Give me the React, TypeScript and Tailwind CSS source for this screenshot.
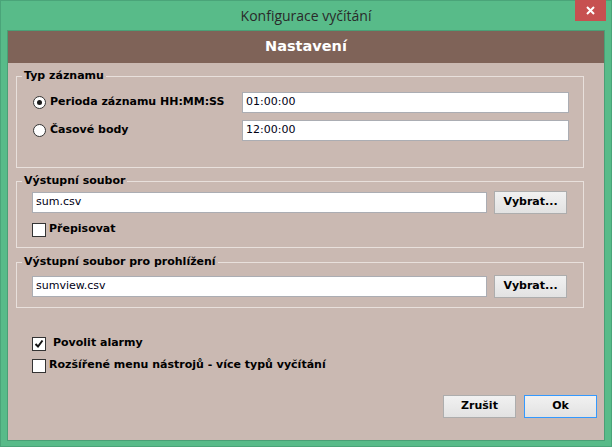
import React from "react";

const tah = { fontFamily: '"DejaVu Sans", Verdana, sans-serif' };

function Radio({ checked }: { checked?: boolean }) {
  return (
    <div className="w-[13px] h-[13px] rounded-full border border-[#333] bg-white flex items-center justify-center shrink-0">
      {checked && <div className="w-[5px] h-[5px] rounded-full bg-[#1a1a1a]" />}
    </div>
  );
}

function Check({ checked }: { checked?: boolean }) {
  return (
    <div className="w-[14px] h-[14px] border border-[#333] bg-white flex items-center justify-center shrink-0">
      {checked && (
        <svg width="10" height="10" viewBox="0 0 10 10">
          <polyline points="1.5,5 4,7.5 8.5,1.5" fill="none" stroke="#111" strokeWidth="2" />
        </svg>
      )}
    </div>
  );
}

function Input({ value }: { value: string }) {
  return (
    <div className="flex-1 h-[21px] border border-[#abadb3] bg-white flex items-center pl-[3px] text-[11px] text-[#000014]">
      {value}
    </div>
  );
}

function Btn({ label, focus }: { label: string; focus?: boolean }) {
  return (
    <div
      className={
        "w-[73px] h-[23px] flex items-center justify-center text-[11px] font-bold text-black bg-gradient-to-b from-[#f1f1f1] to-[#e2e2e2] border " +
        (focus ? "border-[#3399ff]" : "border-[#adadad]")
      }
    >
      {label}
    </div>
  );
}

function Group({ title, children, className }: { title: string; children: React.ReactNode; className?: string }) {
  return (
    <fieldset className={"border border-[#e8e0dc] m-0 p-0 " + (className ?? "")}>
      <legend className="ml-[5px] px-[2px] text-[11px] font-bold leading-[14px] text-black">{title}</legend>
      {children}
    </fieldset>
  );
}

export default function App() {
  return (
    <div
      className="w-[612px] h-[447px] bg-[#58bb89] border border-[#4aa479] relative flex flex-col"
      style={tah}
    >
      <div
        className="h-[29px] flex items-center justify-center text-[14px] text-[#2a2a2a]"
        style={{ fontFamily: '"Open Sans", "Noto Sans", sans-serif' }}
      >
        Konfigurace vyčítání
      </div>
      <div className="absolute top-[-1px] right-[5px] w-[31px] h-[21px] bg-[#c75050] flex items-center justify-center">
        <svg width="9" height="9" viewBox="0 0 9 9">
          <path d="M1 1 L8 8 M8 1 L1 8" stroke="#fff" strokeWidth="2" />
        </svg>
      </div>
      <div className="mx-[6px] h-[411px] border border-[#4a9f76] bg-[#cab9b2] flex flex-col">
        <div className="h-[32px] bg-[#7f6358] flex items-center justify-center text-white font-bold text-[14.5px]">
          Nastavení
        </div>
        <div className="pl-[8px] pr-[20px] flex flex-col">
          <Group title="Typ záznamu" className="mt-[6px]">
            <div className="pt-[9px] pb-[26px] pl-[16px] pr-[14px] flex flex-col gap-[7px]">
              <div className="flex items-center h-[21px]">
                <div className="w-[209px] flex items-center gap-[4px] text-[11px] font-bold text-black">
                  <Radio checked />
                  <span>Perioda záznamu HH:MM:SS</span>
                </div>
                <Input value="01:00:00" />
              </div>
              <div className="flex items-center h-[21px]">
                <div className="w-[209px] flex items-center gap-[4px] text-[11px] font-bold text-black">
                  <Radio />
                  <span>Časové body</span>
                </div>
                <Input value="12:00:00" />
              </div>
            </div>
          </Group>
          <Group title="Výstupní soubor" className="mt-[6px]">
            <div className="pt-[3px] pb-[11px] pl-[15px] pr-[16px] flex flex-col gap-[9px]">
              <div className="flex items-center gap-[7px] h-[23px]">
                <Input value="sum.csv" />
                <Btn label="Vybrat..." />
              </div>
              <div className="flex items-center gap-[3px] h-[13px] text-[11px] font-bold text-black">
                <Check />
                <span>Přepisovat</span>
              </div>
            </div>
          </Group>
          <Group title="Výstupní soubor pro prohlížení" className="mt-[7px]">
            <div className="pt-[6px] pb-[9px] pl-[15px] pr-[16px] flex flex-col">
              <div className="flex items-center gap-[7px] h-[23px]">
                <Input value="sumview.csv" />
                <Btn label="Vybrat..." />
              </div>
            </div>
          </Group>
        </div>
        <div className="pl-[24px] mt-[29px] flex flex-col gap-[9px] text-[11px] font-bold text-black">
          <div className="flex items-center gap-[7px] h-[13px]">
            <Check checked />
            <span>Povolit alarmy</span>
          </div>
          <div className="flex items-center gap-[3px] h-[13px]">
            <Check />
            <span>Rozšířené menu nástrojů - více typů vyčítání</span>
          </div>
        </div>
        <div className="mt-[23px] pr-[7px] flex justify-end gap-[8px]">
          <Btn label="Zrušit" />
          <Btn label="Ok" focus />
        </div>
      </div>
    </div>
  );
}
